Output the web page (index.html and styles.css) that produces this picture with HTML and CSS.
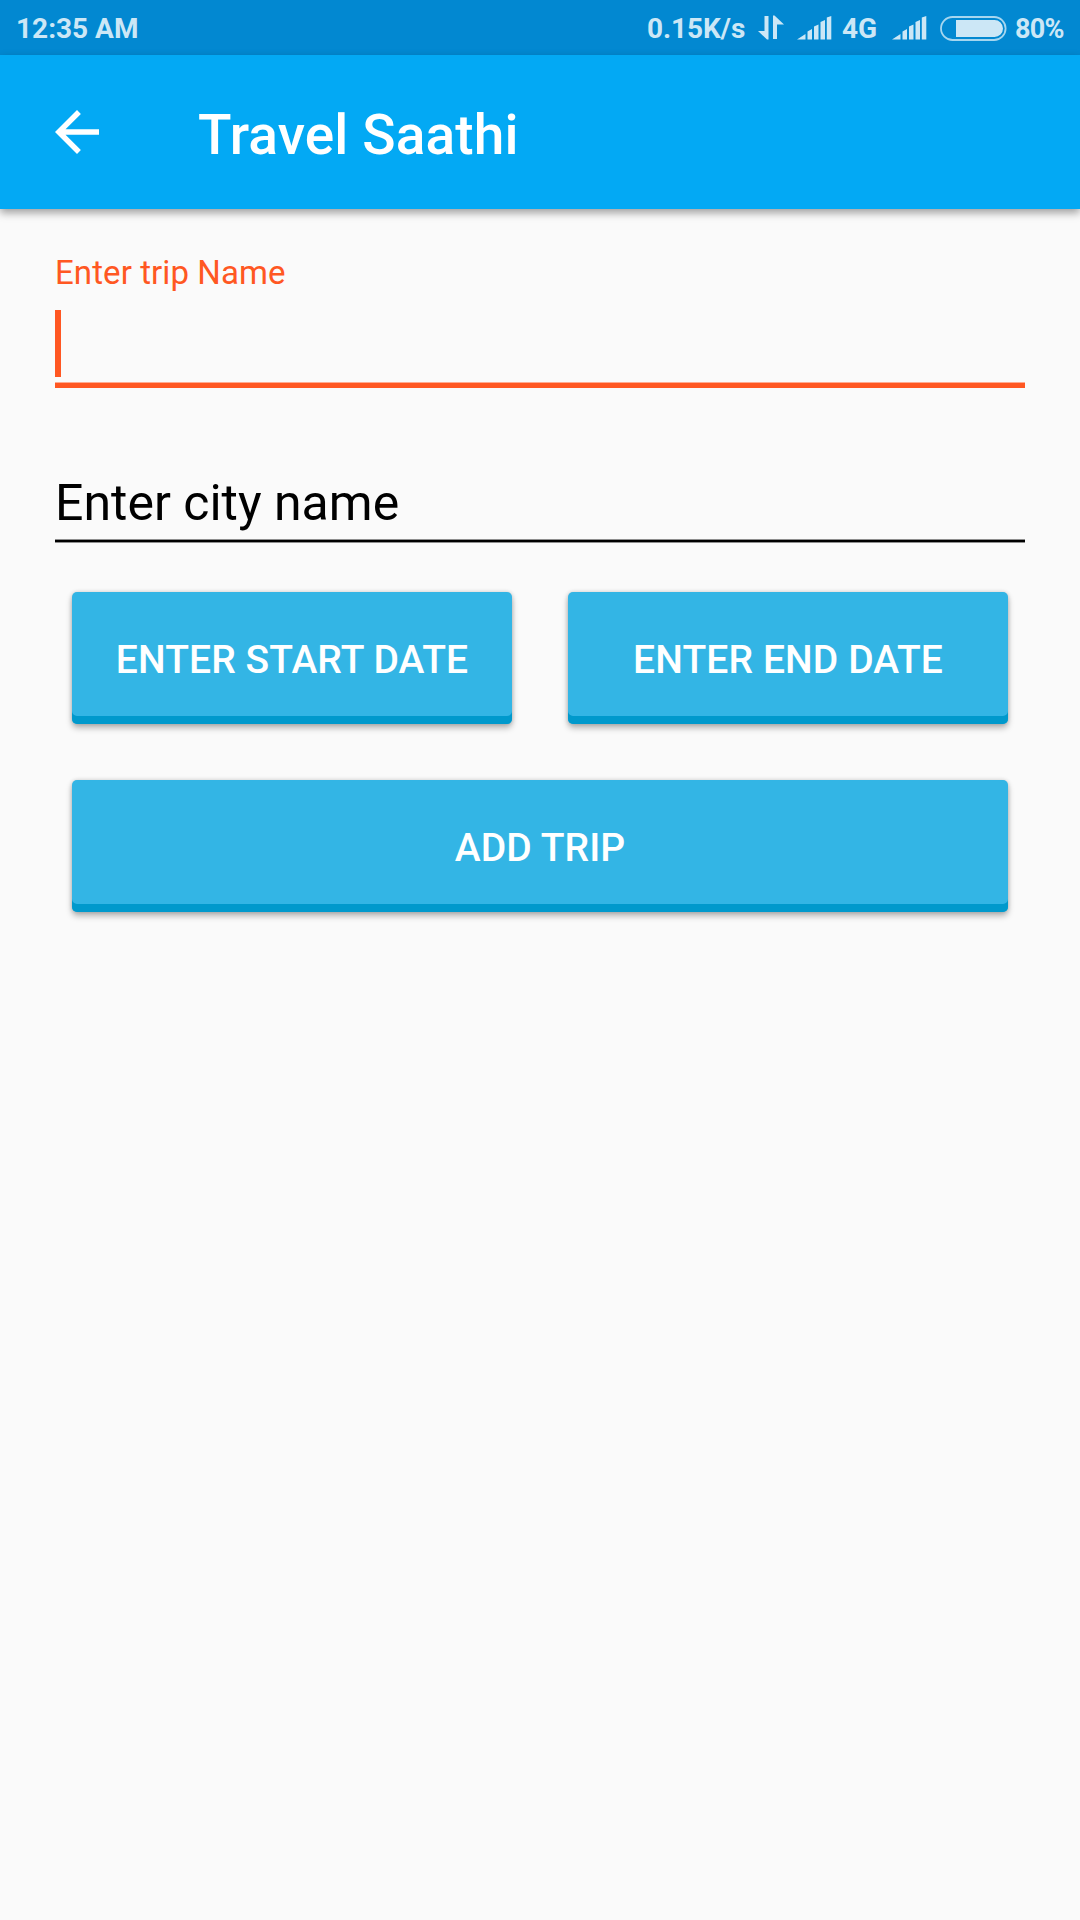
FILE: index.html
```html
<!DOCTYPE html>
<html lang="en">
<head>
<meta charset="utf-8">
<title>Travel Saathi</title>
<link rel="stylesheet" href="styles.css">
</head>
<body>
<div class="status">
  <span class="clock">12:35 AM</span>
  <span class="speed">0.15K/s</span>
  <svg class="transfer" width="26" height="26" viewBox="0 0 26 26"><path d="M6.5 1H10.5V24.5H9L0 16H6.5Z"/><path d="M15 24V.5H16.5L26 9.5H19V24Z"/></svg>
  <svg class="signal" width="35" height="24" viewBox="0 0 35 24"><path d="M0 23.5L8.5 18V23.5ZM10.5 15.5L15 13V23.5H10.5ZM17 10.5L21.5 8.5V23.5H17ZM23.5 6L28 4V23.5H23.5ZM29.8 1.5L34.3 0V23.5H29.8Z"/></svg>
  <span class="network">4G</span>
  <svg class="signal" width="35" height="24" viewBox="0 0 35 24"><path d="M0 23.5L8.5 18V23.5ZM10.5 15.5L15 13V23.5H10.5ZM17 10.5L21.5 8.5V23.5H17ZM23.5 6L28 4V23.5H23.5ZM29.8 1.5L34.3 0V23.5H29.8Z"/></svg>
  <svg class="battery" width="67" height="25" viewBox="0 0 67 25"><rect class="battery-shell" x="1" y="1" width="64.6" height="23" rx="11.5"/><path d="M16 4H54.5A8.5 8.5 0 0 1 54.5 21H16Z"/></svg>
  <span class="percent">80%</span>
</div>
<header class="toolbar">
  <svg class="back" width="66" height="66" viewBox="0 0 24 24"><path d="M20 11H7.83l5.59-5.59L12 4l-8 8 8 8 1.41-1.41L7.83 13H20v-2z"/></svg>
  <h1 class="title">Travel Saathi</h1>
</header>
<main class="form">
  <label class="label">Enter trip Name</label>
  <div class="field focused"><span class="cursor"></span></div>
  <div class="field idle">Enter city name</div>
  <div class="buttons">
    <button class="button">ENTER START DATE</button>
    <button class="button">ENTER END DATE</button>
    <button class="button wide">ADD TRIP</button>
  </div>
</main>
</body>
</html>
```
FILE: styles.css
```css
* { box-sizing: border-box; }
body {
  margin: 0;
  width: 1080px;
  height: 1920px;
  overflow: hidden;
  background: #fafafa;
  font-family: Roboto, sans-serif;
}
.status {
  display: flex;
  align-items: center;
  height: 55px;
  padding: 1px 0 0 16px;
  background: #0288d1;
  color: #cce7f6;
  fill: #cce7f6;
  font-size: 28px;
  font-weight: 700;
  line-height: 34px;
  white-space: nowrap;
}
.status svg { flex: none; }
.status span { padding-top: 2px; }
.clock { width: 631px; }
.speed { width: 111px; letter-spacing: -.1px; }
.transfer { margin-right: 13px; }
.network { width: 50px; margin-left: 10px; }
.battery { margin: 0 8px 0 13px; }
.battery-shell { fill: none; stroke: #a6d6ef; stroke-width: 1.8; }
.percent { font-size: 27px; letter-spacing: -.8px; }
.toolbar {
  display: flex;
  align-items: center;
  gap: 88px;
  height: 154px;
  padding-left: 44px;
  background: #03a9f4;
  box-shadow: 0 4px 8px rgba(0, 0, 0, .36);
}
.back { fill: #fff; }
.title {
  margin: 0;
  padding-top: 6px;
  color: #fff;
  font-size: 55px;
  font-weight: 500;
  letter-spacing: .13px;
  line-height: 64px;
}
.form { padding: 44px 55px 0; }
.label {
  display: block;
  height: 57px;
  color: #ff5722;
  font-size: 33px;
  letter-spacing: .09px;
  line-height: 39px;
}
.focused {
  height: 78px;
  border-bottom: 5px solid #ff5722;
  box-shadow: inset 0 -1px #ffab91;
}
.cursor {
  display: block;
  width: 6px;
  height: 67px;
  background: #ff5722;
}
.idle {
  height: 68px;
  margin-top: 86px;
  color: #000;
  font-size: 50px;
  line-height: 58px;
  border-bottom: 2px solid #000;
  box-shadow: 0 1px #8e8e8e, inset 0 -1px #8e8e8e;
}
.buttons {
  display: grid;
  grid-template-columns: 1fr 1fr;
  gap: 56px;
  padding: 50px 17px 0;
}
.button {
  height: 132px;
  padding: 4px 0 0;
  border: 0;
  border-radius: 5px;
  background: #33b5e5;
  box-shadow: inset 0 -8px #0099cc, 0 4px 6px rgba(0, 0, 0, .28), 0 0 4px rgba(0, 0, 0, .16);
  color: #fff;
  font: 500 39px/46px Roboto, sans-serif;
  letter-spacing: .1px;
}
.wide { grid-column: 1 / -1; }
```
